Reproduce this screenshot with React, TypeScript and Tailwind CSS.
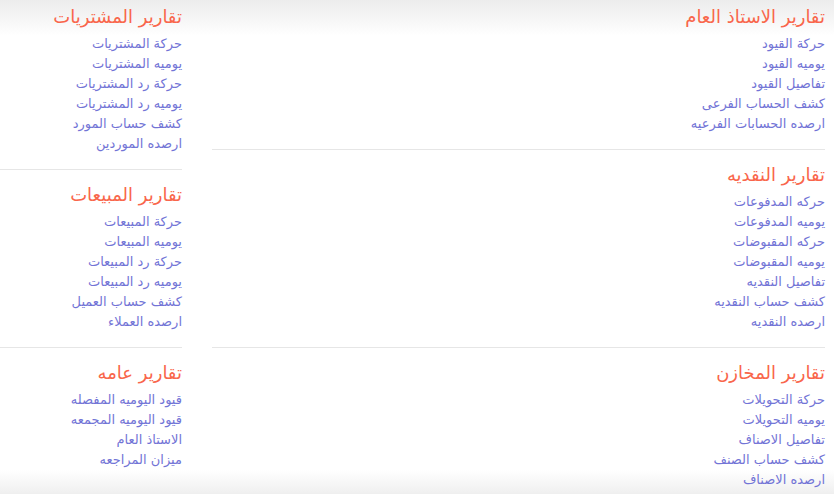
import React from 'react';

type Section = {
    title: string;
    items: string[];
};

// Right (wide) column
const mainSections: Section[] = [
    {
        title: 'تقارير الاستاذ العام',
        items: ['حركة القيود', 'يوميه القيود', 'تفاصيل القيود', 'كشف الحساب الفرعى', 'ارصده الحسابات الفرعيه'],
    },
    {
        title: 'تقارير النقديه',
        items: [
            'حركه المدفوعات',
            'يوميه المدفوعات',
            'حركه المقبوضات',
            'يوميه المقبوضات',
            'تفاصيل النقديه',
            'كشف حساب النقديه',
            'ارصده النقديه',
        ],
    },
    {
        title: 'تقارير المخازن',
        items: ['حركة التحويلات', 'يوميه التحويلات', 'تفاصيل الاصناف', 'كشف حساب الصنف', 'ارصده الاصناف'],
    },
];

// Left (narrow) column
const sideSections: Section[] = [
    {
        title: 'تقارير المشتريات',
        items: [
            'حركة المشتريات',
            'يوميه المشتريات',
            'حركة رد المشتريات',
            'يوميه رد المشتريات',
            'كشف حساب المورد',
            'ارصده الموردين',
        ],
    },
    {
        title: 'تقارير المبيعات',
        items: [
            'حركة المبيعات',
            'يوميه المبيعات',
            'حركة رد المبيعات',
            'يوميه رد المبيعات',
            'كشف حساب العميل',
            'ارصده العملاء',
        ],
    },
    {
        title: 'تقارير عامه',
        items: ['قيود اليوميه المفصله', 'قيود اليوميه المجمعه', 'الاستاذ العام', 'ميزان المراجعه'],
    },
];

function ReportSection({ section, first, last }: { section: Section; first: boolean; last: boolean }) {
    return (
        <div className={`${first ? 'pt-[5px]' : 'pt-[13px]'} ${last ? '' : 'pb-[15px] border-b border-[#e6e6e6]'}`}>
            <h3 className="text-[18px] leading-[24px] text-[#f9664b] font-normal">{section.title}</h3>
            <ul className="mt-[5px]">
                {section.items.map((item) => (
                    <li key={item} className="text-[13px] leading-[20px]">
                        <a href="#" className="text-[#7274d6] hover:underline">
                            {item}
                        </a>
                    </li>
                ))}
            </ul>
        </div>
    );
}

function App() {
    return (
        <div
            dir="rtl"
            className="w-[834px] h-[494px] overflow-hidden bg-[linear-gradient(to_bottom,#ececec_0px,#ffffff_36px,#ffffff_470px,#efefef_494px)] font-['DejaVu_Sans',sans-serif]"
        >
            <div className="flex gap-[30px]">
                {/* Main reports column */}
                <div className="w-[622px] pr-[9px]">
                    {mainSections.map((s, i) => (
                        <ReportSection key={s.title} section={s} first={i === 0} last={i === mainSections.length - 1} />
                    ))}
                </div>

                {/* Side reports column */}
                <div className="w-[182px]">
                    {sideSections.map((s, i) => (
                        <ReportSection key={s.title} section={s} first={i === 0} last={i === sideSections.length - 1} />
                    ))}
                </div>
            </div>
        </div>
    );
}

export default App;
